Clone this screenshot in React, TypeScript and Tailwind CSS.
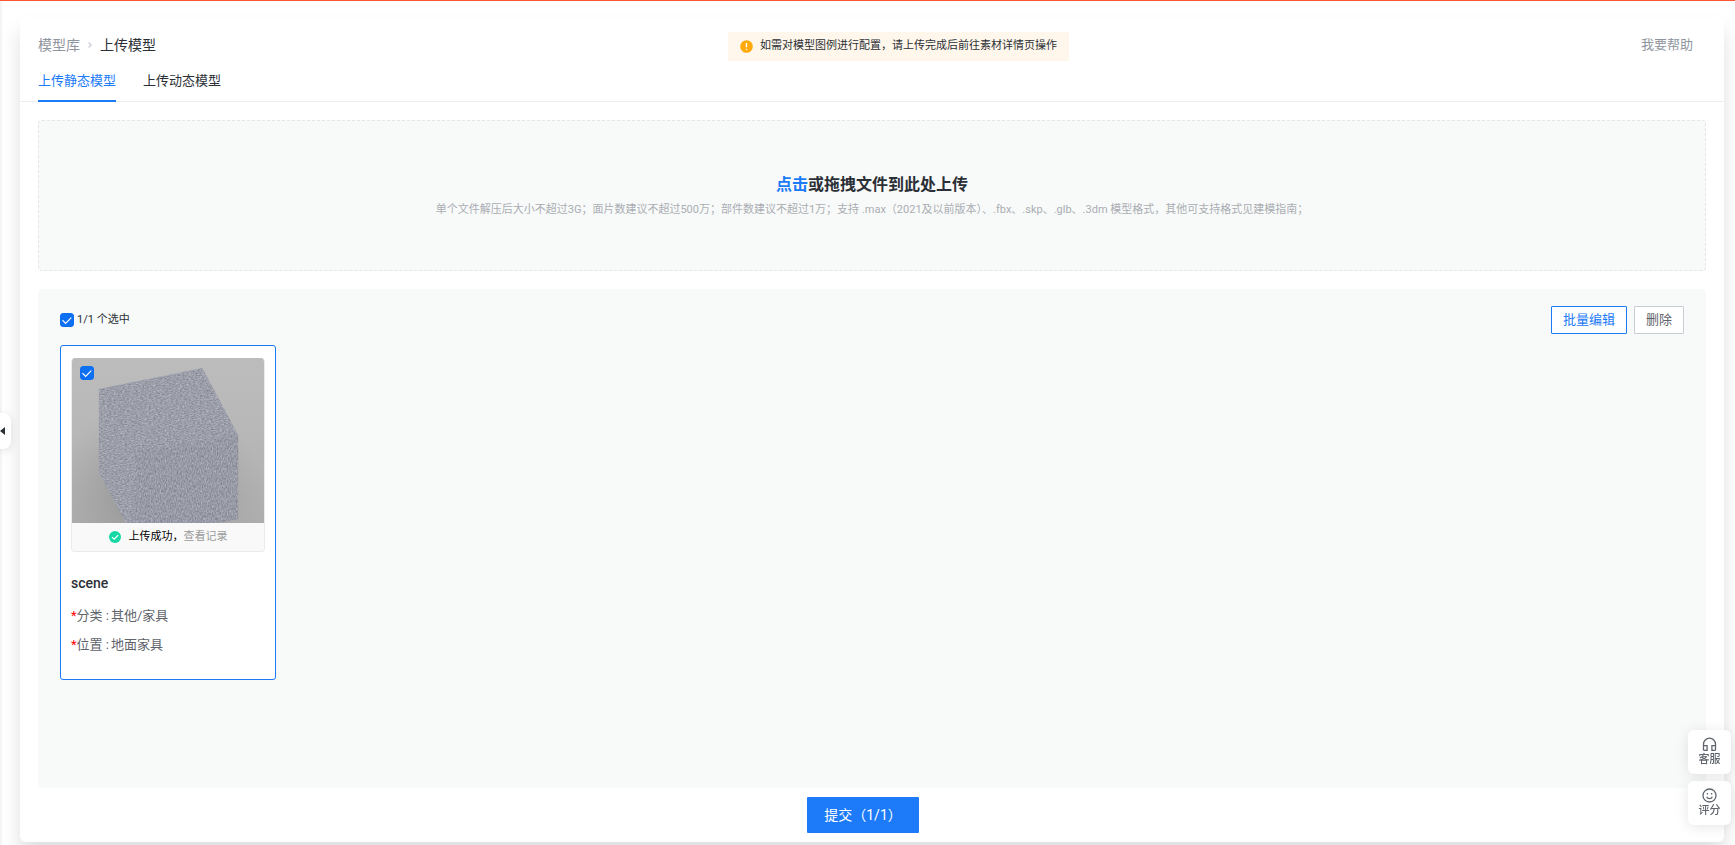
import React, { useState } from 'react';

const tabs = ['上传静态模型', '上传动态模型'];

const models = [
  { id: 1, name: 'scene', category: '其他/家具', position: '地面家具' },
];

type CheckProps = {
  label: string;
  checked: boolean;
  onChange: (checked: boolean) => void;
};

const Check = ({ label, checked, onChange }: CheckProps) => (
  <span className="relative flex size-3.5">
    <input
      type="checkbox"
      aria-label={label}
      checked={checked}
      onChange={(e) => onChange(e.target.checked)}
      className="peer size-3.5 appearance-none rounded-[3px] border border-[#c9cdd4] bg-white checked:border-[#0d6ff2] checked:bg-[#0d6ff2]"
    />
    <svg viewBox="0 0 14 14" className="pointer-events-none absolute inset-0 hidden size-3.5 peer-checked:block" fill="none" stroke="#fff" strokeWidth="1.2">
      <path d="M2.5 7.2 5.6 10.5 11.3 4.6" />
    </svg>
  </span>
);

const CubePreview = () => (
  <svg viewBox="0 0 193 165" className="block h-[165px] w-full" preserveAspectRatio="none" role="img" aria-label="scene">
    <defs>
      <linearGradient id="backdrop" x1="0" y1="0" x2="0" y2="1">
        <stop offset="0" stopColor="#bcbcbc" />
        <stop offset="0.5" stopColor="#b7b7b7" />
        <stop offset="1" stopColor="#adadad" />
      </linearGradient>
      <radialGradient id="shade" cx="0.45" cy="0.8" r="0.55">
        <stop offset="0" stopColor="#777" stopOpacity="0.7" />
        <stop offset="1" stopColor="#999" stopOpacity="0" />
      </radialGradient>
      <filter id="fabric" x="0" y="0" width="1" height="1" colorInterpolationFilters="sRGB">
        <feTurbulence type="fractalNoise" baseFrequency="0.45 0.8" numOctaves="3" seed="4" />
        <feColorMatrix values="0.3 0 0 0 0.46  0.3 0 0 0 0.47  0.3 0 0 0 0.515  0 0 0 0 1" />
        <feComposite in2="SourceGraphic" operator="in" />
      </filter>
      <filter id="fabricFront" x="0" y="0" width="1" height="1" colorInterpolationFilters="sRGB">
        <feTurbulence type="fractalNoise" baseFrequency="0.8 0.4" numOctaves="3" seed="9" />
        <feColorMatrix values="0.3 0 0 0 0.445  0.3 0 0 0 0.455  0.3 0 0 0 0.5  0 0 0 0 1" />
        <feComposite in2="SourceGraphic" operator="in" />
      </filter>
    </defs>
    <rect width="193" height="165" fill="url(#backdrop)" />
    <rect width="193" height="165" fill="url(#shade)" />
    <path d="M27 31 131 10 167 77 167 161 145 165 54 165 27 114Z" fill="#9b9da8" filter="url(#fabric)" />
    <path d="M63 94 167 77 167 161 145 165 63 165Z" fill="#9799a4" filter="url(#fabricFront)" />
  </svg>
);

export default function App() {
  const [tab, setTab] = useState(0);
  const [selected, setSelected] = useState<number[]>([1]);

  const toggle = (id: number, on: boolean) =>
    setSelected(on ? [...selected, id] : selected.filter((s) => s !== id));

  return (
    <div className="flex min-h-screen flex-col border-t border-[#ff5533] bg-white pt-4 pr-[11px] pb-[3px] pl-5 font-[Roboto,'Noto_Sans_CJK_SC',sans-serif] text-[13px] leading-5 text-[#2b2f36]">
      <div className="fixed top-px bottom-0 left-0 w-0.5 bg-[#f4f4f4]"></div>

      <main className="flex flex-1 flex-col rounded-md bg-white shadow-[0_14px_20px_rgba(0,0,0,0.13)]">
        <header className="flex items-center justify-between pt-[15px] pr-[31px] pl-[18px]">
          <nav className="flex items-center gap-2 pb-1 text-sm">
            <a href="#library" className="text-[#8f959e]">模型库</a>
            <svg width="4" height="6" viewBox="0 0 4 6" fill="none" stroke="#c9cdd4" strokeWidth="1.2">
              <path d="M.6.5 3.1 3 .6 5.5" />
            </svg>
            <span>上传模型</span>
          </nav>
          <div className="flex h-[29px] items-center gap-[7px] bg-[#fff7eb] px-3 pb-0.5 text-[11px]">
            <svg width="13" height="13" viewBox="0 0 13 13" className="mt-0.5">
              <circle cx="6.5" cy="6.5" r="6.3" fill="#ffa90a" />
              <path d="M6.5 3v4.2M6.5 8.7v1.3" stroke="#fff" strokeWidth="1.4" />
            </svg>
            如需对模型图例进行配置，请上传完成后前往素材详情页操作
          </div>
          <a href="#help" className="pb-1 text-[#8f959e]">我要帮助</a>
        </header>

        <div role="tablist" className="flex gap-[27px] border-b border-[#ebedf0] px-[18px]">
          {tabs.map((name, i) => (
            <button
              key={name}
              role="tab"
              aria-selected={tab === i}
              onClick={() => setTab(i)}
              className={`-mb-px h-[41px] border-b-2 ${tab === i ? 'border-[#1a7af8] text-[#1a7af8]' : 'border-transparent'}`}
            >
              {name}
            </button>
          ))}
        </div>

        <section className="mx-[18px] mt-[18px] flex h-[151px] flex-col items-center justify-center rounded-sm border border-dashed border-[#e3e5e8] bg-[#f8faf9] pt-0.5">
          <h2 className="text-base leading-6 font-bold">
            <button className="text-[#1a7af8]">点击</button>或拖拽文件到此处上传
          </h2>
          <p className="mt-[3px] text-[11px] text-[#aaadb3]">
            单个文件解压后大小不超过3G；面片数建议不超过500万；部件数建议不超过1万；支持 .max（2021及以前版本）、.fbx、.skp、.glb、.3dm 模型格式，其他可支持格式见建模指南；
          </p>
        </section>

        <section className="mx-[18px] mt-[18px] flex-1 rounded-sm bg-[#f8faf9] px-[22px] pt-[17px]">
          <div className="flex items-center justify-between">
            <div className="flex items-center gap-[3px]">
              <Check
                label="全选"
                checked={selected.length === models.length}
                onChange={(on) => setSelected(on ? models.map((m) => m.id) : [])}
              />
              <span className="text-[11px]">{selected.length}/{models.length} 个选中</span>
            </div>
            <div className="flex gap-[7px]">
              <button className="h-7 rounded-[1px] border border-[#1a7af8] bg-white px-[11px] text-[#1a7af8]">批量编辑</button>
              <button className="h-7 rounded-[1px] border border-[#c9cdd4] bg-white px-[11px] text-[#5f646c]">删除</button>
            </div>
          </div>

          <div className="mt-[11px] flex flex-wrap gap-4">
            {models.map((m) => (
              <article key={m.id} className="w-[216px] rounded-[3px] border border-[#1a7af8] bg-white px-2.5 pt-3 pb-6">
                <div className="relative overflow-hidden rounded-sm border border-t-0 border-[#ebebeb]">
                  <CubePreview />
                  <div className="absolute top-2 left-2">
                    <Check label={m.name} checked={selected.includes(m.id)} onChange={(on) => toggle(m.id, on)} />
                  </div>
                  <div className="flex h-7 items-center justify-center bg-[#f9f9fa] text-[11px] text-black">
                    <svg width="12" height="12" viewBox="0 0 12 12" className="mr-2">
                      <circle cx="6" cy="6" r="6" fill="#14d8a6" />
                      <path d="M3 6.1 5.2 8.2 9.2 4.1" fill="none" stroke="#fff" strokeWidth="1.2" />
                    </svg>
                    上传成功，<a href="#log" className="text-[#999]">查看记录</a>
                  </div>
                </div>
                <h3 className="mt-[21px] text-sm leading-5 font-medium">{m.name}</h3>
                <dl className="mt-[13px] flex flex-col gap-[9px] text-[#5f646c]">
                  <div className="flex">
                    <dt><span className="text-[#f00]">*</span>分类 :</dt>
                    <dd className="ml-0.5">{m.category}</dd>
                  </div>
                  <div className="flex">
                    <dt><span className="text-[#f00]">*</span>位置 :</dt>
                    <dd className="ml-0.5">{m.position}</dd>
                  </div>
                </dl>
              </article>
            ))}
          </div>
        </section>

        <footer className="flex justify-center pt-[9px] pr-[18px] pb-[9px]">
          <button className="h-9 rounded-[1px] bg-[#1d7bf9] px-[17px] text-sm text-white">
            提交（{selected.length}/{models.length}）
          </button>
        </footer>
      </main>

      <button aria-label="收起" className="fixed top-[413px] left-0 flex h-9 w-[11px] items-center rounded-r-lg bg-white shadow-[0_2px_8px_rgba(0,0,0,0.12)]">
        <svg width="5" height="8" viewBox="0 0 5 8" fill="#2b2f36">
          <path d="M5 0v8L0 4Z" />
        </svg>
      </button>

      <aside className="fixed right-1 bottom-5 flex flex-col gap-[7px] text-[11px] leading-3 font-medium text-[#5f646c]">
        <button className="flex h-11 w-[43px] flex-col items-center gap-0.5 rounded-md bg-white pt-[7px] shadow-[0_2px_14px_rgba(0,0,0,0.1)]">
          <svg width="15" height="15" viewBox="0 0 15 15" fill="none" stroke="#5f646c" strokeWidth="1.3">
            <path d="M1.5 13.3V7.2a6 6 0 0 1 12 0v6.1M1.5 8.7h3.6v4.6H1.5M13.5 8.7H9.9v4.6h3.6" />
          </svg>
          客服
        </button>
        <button className="flex h-11 w-[43px] flex-col items-center gap-0.5 rounded-md bg-white pt-[7px] shadow-[0_2px_14px_rgba(0,0,0,0.1)]">
          <svg width="15" height="15" viewBox="0 0 15 15" fill="none" stroke="#5f646c" strokeWidth="1.3">
            <circle cx="7.5" cy="7.5" r="6.5" />
            <path d="M4.7 8.8a3 3 0 0 0 5.6 0M5.4 4.9v1.6M9.6 4.9v1.6" />
          </svg>
          评分
        </button>
      </aside>
    </div>
  );
}
